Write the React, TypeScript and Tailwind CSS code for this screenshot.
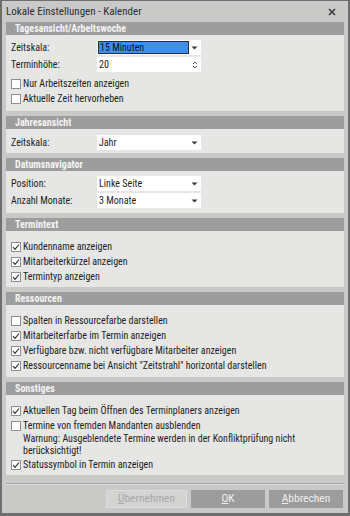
import React from 'react'

type Row = { label: string; value: string; kind?: 'select' | 'spin'; selected?: boolean }

const Header: React.FC<{ title: string }> = ({ title }) => (
    <div className="h-[13px] bg-[#9d9d9d] pl-[9px] flex items-center text-[#f4f4f4] font-bold leading-none">
        {title}
    </div>
)

const Arrow = () => (
    <svg width="7" height="4" viewBox="0 0 7 4" className="shrink-0">
        <path d="M0.5 0.5h6L3.5 3.5z" fill="#3a3a3a" />
    </svg>
)

const Spin = () => (
    <svg width="6" height="10" viewBox="0 0 6 10" className="shrink-0">
        <path d="M1 4L3 2L5 4M1 6L3 8L5 6" fill="none" stroke="#5a5a5a" strokeWidth="1" />
    </svg>
)

const Field: React.FC<Row> = ({ label, value, kind = 'select', selected }) => (
    <div className="h-[17px] flex items-center">
        <div className="w-[86px] text-[#1e1e1e] whitespace-nowrap">{label}</div>
        <div className="w-[104px] h-[15px] bg-white flex items-center pl-[1px] pr-[3px]">
            <div
                className={
                    selected
                        ? 'h-[13px] w-[91px] bg-[#3d8ff0] border border-[#2d2d2d] flex items-center pl-[1px] text-[#111] whitespace-nowrap'
                        : 'flex-1 flex items-center pl-[1px] text-[#1e1e1e] whitespace-nowrap'
                }
            >
                {value}
            </div>
            <div className="flex-1" />
            {kind === 'select' ? <Arrow /> : <Spin />}
        </div>
    </div>
)

const Check: React.FC<{ label: string; checked?: boolean }> = ({ label, checked }) => (
    <div className="h-[15px] flex items-center">
        <div className="w-[10px] h-[10px] bg-white border border-[#8f8f8f] flex items-center justify-center shrink-0">
            {checked && (
                <svg width="8" height="8" viewBox="0 0 8 8">
                    <path d="M1 4.2L3 6.3L7 1.5" fill="none" stroke="#2a2a2a" strokeWidth="1.1" />
                </svg>
            )}
        </div>
        <span className="ml-[2px] text-[#1e1e1e] whitespace-nowrap">{label}</span>
    </div>
)

const Section: React.FC<{ title: string; className: string; children: React.ReactNode }> = ({ title, className, children }) => (
    <div className="flex flex-col">
        <Header title={title} />
        <div className={'bg-[#e6e6e4] pl-[5px] ' + className}>{children}</div>
    </div>
)

const App: React.FC = () => {
    return (
        <div className="w-[350px] h-[516px] bg-[#c9c9c8] border-x-2 border-t border-b-[3px] border-[#6e6e6e] flex flex-col font-['Roboto_Condensed','Roboto',sans-serif] text-[10px] leading-none select-none">
            {/* Title bar */}
            <div className="h-[21px] flex items-center justify-between pl-[4px] pr-[12px] text-[#2e2e2e] text-[11px]">
                <span>Lokale Einstellungen - Kalender</span>
                <svg width="8" height="8" viewBox="0 0 8 8">
                    <path d="M1 1L7 7M7 1L1 7" stroke="#3a3a3a" strokeWidth="1.6" />
                </svg>
            </div>

            <div className="px-[4px] flex flex-col gap-[5px]">
                <Section title="Tagesansicht/Arbeitswoche" className="pt-[4px] pb-[5px]">
                    <Field label="Zeitskala:" value="15 Minuten" selected />
                    <Field label="Terminhöhe:" value="20" kind="spin" />
                    <div className="h-[3px]" />
                    <Check label="Nur Arbeitszeiten anzeigen" />
                    <Check label="Aktuelle Zeit hervorheben" />
                </Section>

                <Section title="Jahresansicht" className="pt-[5px] pb-[2px]">
                    <Field label="Zeitskala:" value="Jahr" />
                </Section>

                <Section title="Datumsnavigator" className="pt-[4px] pb-[4px]">
                    <Field label="Position:" value="Linke Seite" />
                    <Field label="Anzahl Monate:" value="3 Monate" />
                </Section>

                <Section title="Termintext" className="pt-[8px] pb-[3px]">
                    <Check label="Kundenname anzeigen" checked />
                    <Check label="Mitarbeiterkürzel anzeigen" checked />
                    <Check label="Termintyp anzeigen" checked />
                </Section>

                <Section title="Ressourcen" className="pt-[8px] pb-[4px]">
                    <Check label="Spalten in Ressourcefarbe darstellen" />
                    <Check label="Mitarbeiterfarbe im Termin anzeigen" checked />
                    <Check label="Verfügbare bzw. nicht verfügbare Mitarbeiter anzeigen" checked />
                    <Check label='Ressourcenname bei Ansicht "Zeitstrahl" horizontal darstellen' checked />
                </Section>

                <Section title="Sonstiges" className="pt-[8px] pb-[3px]">
                    <Check label="Aktuellen Tag beim Öffnen des Terminplaners anzeigen" checked />
                    <Check label="Termine von fremden Mandanten ausblenden" />
                    <div className="pl-[12px] text-[#1e1e1e] leading-[12px] whitespace-nowrap">
                        Warnung: Ausgeblendete Termine werden in der Konfliktprüfung nicht
                        <br />
                        berücksichtigt!
                    </div>
                    <Check label="Statussymbol in Termin anzeigen" checked />
                </Section>
            </div>

            {/* Separator */}
            <div className="mx-[4px] mt-[8px] border-t border-[#a4a4a4] border-b border-b-[#dcdcdc]" />

            {/* Buttons */}
            <div className="flex justify-end gap-[4px] pr-[5px] mt-[5px]">
                <div className="w-[81px] h-[18px] bg-[#d3d3d2] border border-[#dcdcdc] flex items-center justify-center text-[#a9a9a9] text-[11.5px]">
                    <span><span className="underline">Ü</span>bernehmen</span>
                </div>
                <div className="w-[74px] h-[18px] bg-[#9c9c9c] flex items-center justify-center text-[#eeeeee] text-[11.5px]">
                    <span><span className="underline">O</span>K</span>
                </div>
                <div className="w-[74px] h-[18px] bg-[#9c9c9c] flex items-center justify-center text-[#eeeeee] text-[11.5px]">
                    <span><span className="underline">A</span>bbrechen</span>
                </div>
            </div>
        </div>
    )
}

export default App
